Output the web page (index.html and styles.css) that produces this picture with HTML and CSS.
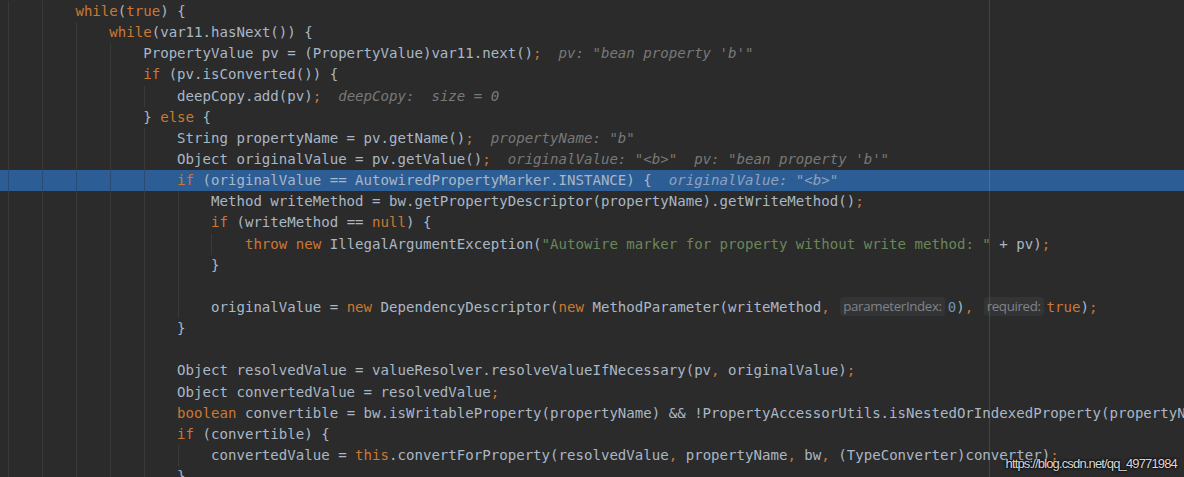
FILE: index.html
```html
<!DOCTYPE html>
<html>
<head>
<meta charset="utf-8">
<link rel="stylesheet" href="styles.css">
</head>
<body>
<div class="editor">
<div class="ln g2">        <span class="k">while</span>(<span class="k">true</span>) {</div>
<div class="ln g3">            <span class="k">while</span>(var11.hasNext()) {</div>
<div class="ln g4">                PropertyValue pv = (PropertyValue)var11.next()<span class="k">;</span>  <span class="d">pv: "bean property 'b'"</span></div>
<div class="ln g4">                <span class="k">if</span> (pv.isConverted()) {</div>
<div class="ln g5">                    deepCopy.add(pv)<span class="k">;</span>  <span class="d">deepCopy:  size = 0</span></div>
<div class="ln g4">                } <span class="k">else</span> {</div>
<div class="ln g5">                    String propertyName = pv.getName()<span class="k">;</span>  <span class="d">propertyName: "b"</span></div>
<div class="ln g5">                    Object originalValue = pv.getValue()<span class="k">;</span>  <span class="d">originalValue: "&lt;b&gt;"  pv: "bean property 'b'"</span></div>
<div class="ln g5 exec">                    <span class="k">if</span> (originalValue == AutowiredPropertyMarker.INSTANCE) {  <span class="d">originalValue: "&lt;b&gt;"</span></div>
<div class="ln g6">                        Method writeMethod = bw.getPropertyDescriptor(propertyName).getWriteMethod()<span class="k">;</span></div>
<div class="ln g6">                        <span class="k">if</span> (writeMethod == <span class="k">null</span>) {</div>
<div class="ln g7">                            <span class="k">throw new</span> IllegalArgumentException(<span class="s">"Autowire marker for property without write method: "</span> + pv)<span class="k">;</span></div>
<div class="ln g6">                        }</div>
<div class="ln g6"> </div>
<div class="ln g6">                        originalValue = <span class="k">new</span> DependencyDescriptor(<span class="k">new</span> MethodParameter(writeMethod<span class="k">,</span> <span class="hint">parameterIndex:</span><span class="n">0</span>)<span class="k">,</span> <span class="hint">required:</span><span class="k">true</span>)<span class="k">;</span></div>
<div class="ln g5">                    }</div>
<div class="ln g5"> </div>
<div class="ln g5">                    Object resolvedValue = valueResolver.resolveValueIfNecessary(pv<span class="k">,</span> originalValue)<span class="k">;</span></div>
<div class="ln g5">                    Object convertedValue = resolvedValue<span class="k">;</span></div>
<div class="ln g5">                    <span class="k">boolean</span> convertible = bw.isWritableProperty(propertyName) &amp;&amp; !PropertyAccessorUtils.isNestedOrIndexedProperty(propertyName)<span class="k">;</span></div>
<div class="ln g5">                    <span class="k">if</span> (convertible) {</div>
<div class="ln g6">                        convertedValue = <span class="k">this</span>.convertForProperty(resolvedValue<span class="k">,</span> propertyName<span class="k">,</span> bw<span class="k">,</span> (TypeConverter)converter)<span class="k">;</span></div>
<div class="ln g5">                    }</div>
<div class="margin"></div>
<div class="watermark">https://blog.csdn.net/qq_49771984</div>
</div>
</body>
</html>
```

FILE: styles.css
```css
html, body {
  margin: 0;
  padding: 0;
  background: #2b2b2b;
}

.editor {
  position: relative;
  width: 1184px;
  height: 477px;
  overflow: hidden;
  padding-top: 1px;
  box-sizing: border-box;
  background: #2b2b2b;
  font-family: "DejaVu Sans Mono", "Liberation Mono", monospace;
  font-size: 14.08px;
  color: #a9b7c6;
}

.ln {
  --gc: #393939;
  height: 21.15px;
  line-height: 21.15px;
  white-space: pre;
  padding-left: 7.6px;
  background-image: repeating-linear-gradient(to right, var(--gc) 0 1px, transparent 1px 4ch);
  background-size: calc(var(--g) * 4ch) 100%;
  background-repeat: no-repeat;
  background-origin: content-box;
  background-position: 0 0;
}

.g2 { --g: 2; }
.g3 { --g: 3; }
.g4 { --g: 4; }
.g5 { --g: 5; }
.g6 { --g: 6; }
.g7 { --g: 7; }

.exec {
  --gc: #284a73;
  background-color: #2d5d95;
}

.k { color: #cc7832; }
.s { color: #6a8759; }
.n { color: #6897bb; }

.d {
  color: #787878;
  font-style: italic;
}

.exec .d { color: #8fa2bd; }

.hint {
  display: inline-block;
  font-family: "Open Sans", "Noto Sans", sans-serif;
  font-size: 13.3px;
  letter-spacing: -0.35px;
  line-height: 19px;
  height: 19px;
  padding: 0 3px;
  margin: 0 3px 0 2px;
  border-radius: 4px;
  background: #333436;
  color: #808386;
  vertical-align: 1px;
}

.margin {
  position: absolute;
  left: 989px;
  top: 0;
  width: 1px;
  height: 100%;
  background: rgba(255, 255, 255, 0.12);
}

.watermark {
  position: absolute;
  right: 7px;
  bottom: 6px;
  font-family: "Liberation Sans", Arial, sans-serif;
  font-size: 13px;
  letter-spacing: -0.85px;
  color: #d8d8d8;
  text-shadow: 0 0 3px #000, 0 0 2px #000;
}
```
